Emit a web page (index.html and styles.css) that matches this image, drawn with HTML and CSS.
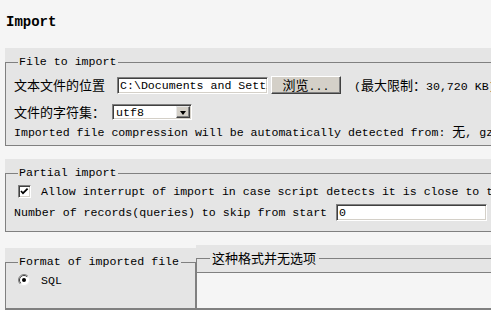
FILE: index.html
```html
<!DOCTYPE html>
<html lang="zh-CN">
<head>
   <meta charset="UTF-8">
   <meta name="viewport" content="width=device-width, initial-scale=1.0">
   <title>Import</title>
   <link rel="stylesheet" href="styles.css">
</head>
<body>
<h2>Import</h2>

<div class="block">
   <fieldset class="fs-file">
      <legend>File to import</legend>
      <div class="row file-row">
         <label class="zh file-label" for="importFile">文本文件的位置</label>
         <input class="text file-input" id="importFile" type="text" value="C:\Documents and Settings\Administrator\db.sql">
         <button type="button"><span class="zh">浏览</span>...</button>
         <span class="limit">(<span class="zh">最大限制：</span>30,720 KB)</span>
      </div>
      <div class="row charset-row">
         <label class="zh charset-label" for="charset">文件的字符集：</label>
         <div class="select" id="charset">
            <span class="select-value">utf8</span>
            <span class="select-arrow"></span>
         </div>
      </div>
      <div class="note">Imported file compression will be automatically detected from: <span class="zh">无</span>, gzip, zip</div>
   </fieldset>
</div>

<div class="block">
   <fieldset class="fs-partial">
      <legend>Partial import</legend>
      <div class="row check-row">
         <span class="checkbox">
            <svg width="11" height="11" viewBox="0 0 11 11"><path d="M2 5 L4 7.2 L8.6 2.6" fill="none" stroke="#000" stroke-width="1.7"/></svg>
         </span>
         <label>Allow interrupt of import in case script detects it is close to time limit. This might be good way to import large files, however it can break transactions.</label>
      </div>
      <div class="row skip-row">
         <label for="skip">Number of records(queries) to skip from start</label>
         <input class="text skip-input" id="skip" type="text" value="0">
      </div>
   </fieldset>
</div>

<div class="formats">
   <div class="block format-list">
      <fieldset class="fs-format">
         <legend>Format of imported file</legend>
         <div class="row radio-row">
            <span class="radio">
               <svg width="12" height="12" viewBox="0 0 12 12">
                  <circle cx="6" cy="6" r="5.5" fill="#fff" stroke="#e8e8e8"/>
                  <path d="M2.1 9.9 A5.5 5.5 0 0 1 9.9 2.1" fill="none" stroke="#808080"/>
                  <path d="M2.8 9.2 A4.5 4.5 0 0 1 9.2 2.8" fill="none" stroke="#404040"/>
                  <circle cx="6" cy="6" r="2" fill="#000"/>
               </svg>
            </span>
            <label>SQL</label>
         </div>
      </fieldset>
   </div>
   <div class="format-opts">
      <div class="opts-head">
         <fieldset class="fs-opts">
            <legend class="zh">这种格式并无选项</legend>
         </fieldset>
      </div>
      <div class="opts-body"></div>
   </div>
</div>
</body>
</html>
```

FILE: styles.css
```css
html, body {
   overflow: hidden;
}
body {
   margin: 0;
   padding: 0 0 0 5px;
   width: 700px;
   background-color: #f5f5f5;
   color: #000;
   font-family: "Liberation Mono", "Noto Sans CJK SC", monospace;
   font-size: 11.6px;
}
h2 {
   margin: 0 0 18px 1px;
   padding-top: 14px;
   font-size: 14px;
   line-height: 16px;
}
.zh {
   font-family: "Noto Sans CJK SC", sans-serif;
   font-size: 13px;
   line-height: 14px;
}
.block {
   background-color: #e5e5e5;
   padding-top: 7px;
   margin-bottom: 13px;
}
fieldset {
   margin: 0;
   padding: 0 8px;
   border: 1px solid #808080;
   min-width: 0;
   overflow: hidden;
}
legend {
   margin-left: 4px;
   padding: 0 2px 0 1px;
   line-height: 14px;
   white-space: nowrap;
}
.row {
   display: flex;
   align-items: center;
   white-space: nowrap;
}

/* file to import */
.fs-file {
   padding-bottom: 7px;
}
.file-row {
   margin-top: 7px;
   height: 18px;
}
.file-label {
   margin-right: 12px;
}
.text {
   box-sizing: border-box;
   padding: 0;
   border: 1px solid;
   border-color: #808080 #fff #fff #808080;
   box-shadow: inset 1px 1px 0 #404040, inset -1px -1px 0 #d4d0c8;
   background-color: #fff;
   font-family: inherit;
   font-size: inherit;
   color: #000;
   padding-left: 2px;
}
.file-input {
   width: 151px;
   height: 17px;
}
button {
   box-sizing: border-box;
   width: 70px;
   height: 18px;
   margin-left: 3px;
   padding: 0;
   border: 1px solid;
   border-color: #fff #404040 #404040 #fff;
   box-shadow: inset -1px -1px 0 #808080;
   background-color: #d4d0c8;
   font-family: inherit;
   font-size: inherit;
   color: #000;
}
.limit {
   margin-left: 13px;
}
.charset-row {
   margin-top: 9px;
   height: 18px;
}
.charset-label {
   margin-right: 7px;
}
.select {
   box-sizing: border-box;
   display: flex;
   align-items: center;
   width: 80px;
   height: 16px;
   border: 1px solid;
   border-color: #808080 #fff #fff #808080;
   box-shadow: inset 1px 1px 0 #404040, inset -1px -1px 0 #d4d0c8;
   background-color: #fff;
   padding: 1px;
}
.select-value {
   padding-left: 2px;
}
.select-arrow {
   box-sizing: border-box;
   position: relative;
   margin-left: auto;
   width: 14px;
   height: 12px;
   border: 1px solid;
   border-color: #e8e8e8 #404040 #404040 #e8e8e8;
   box-shadow: inset -1px -1px 0 #808080;
   background-color: #d4d0c8;
}
.select-arrow::after {
   content: "";
   position: absolute;
   left: 3px;
   top: 4px;
   border-left: 3.5px solid transparent;
   border-right: 3.5px solid transparent;
   border-top: 4px solid #000;
}
.note {
   margin-top: 3px;
   height: 14px;
   line-height: 14px;
   white-space: nowrap;
}

/* partial import */
.fs-partial {
   padding-bottom: 9px;
}
.check-row {
   margin-top: 4px;
   height: 15px;
}
.checkbox {
   box-sizing: border-box;
   display: flex;
   width: 13px;
   height: 13px;
   margin-left: 4px;
   margin-right: 10px;
   border: 1px solid;
   border-color: #808080 #fff #fff #808080;
   box-shadow: inset 1px 1px 0 #404040, inset -1px -1px 0 #d4d0c8;
   background-color: #fff;
}
.skip-row {
   margin-top: 4px;
   height: 19px;
}
.skip-row label {
   margin-right: 9px;
}
.skip-input {
   width: 151px;
   height: 17px;
}

/* format of imported file */
.formats {
   display: flex;
   align-items: flex-start;
}
.format-list {
   box-sizing: border-box;
   width: 191px;
   margin: 3px 0 0;
}
.fs-format {
   padding-bottom: 21px;
   border-bottom-width: 2px;
}
.radio-row {
   margin-top: 4px;
   height: 14px;
}
.radio {
   display: flex;
   margin-left: 4px;
   margin-right: 11px;
}
.format-opts {
   flex: 1;
}
.opts-head {
   background-color: #e5e5e5;
   padding-top: 6px;
}
.fs-opts {
   padding: 0 0 7px;
}
.fs-opts legend {
   margin-left: 13px;
   padding: 0 3px 0 2px;
}
.opts-body {
   height: 35px;
   border-left: 1px solid #808080;
   border-bottom: 2px solid #808080;
}
```
